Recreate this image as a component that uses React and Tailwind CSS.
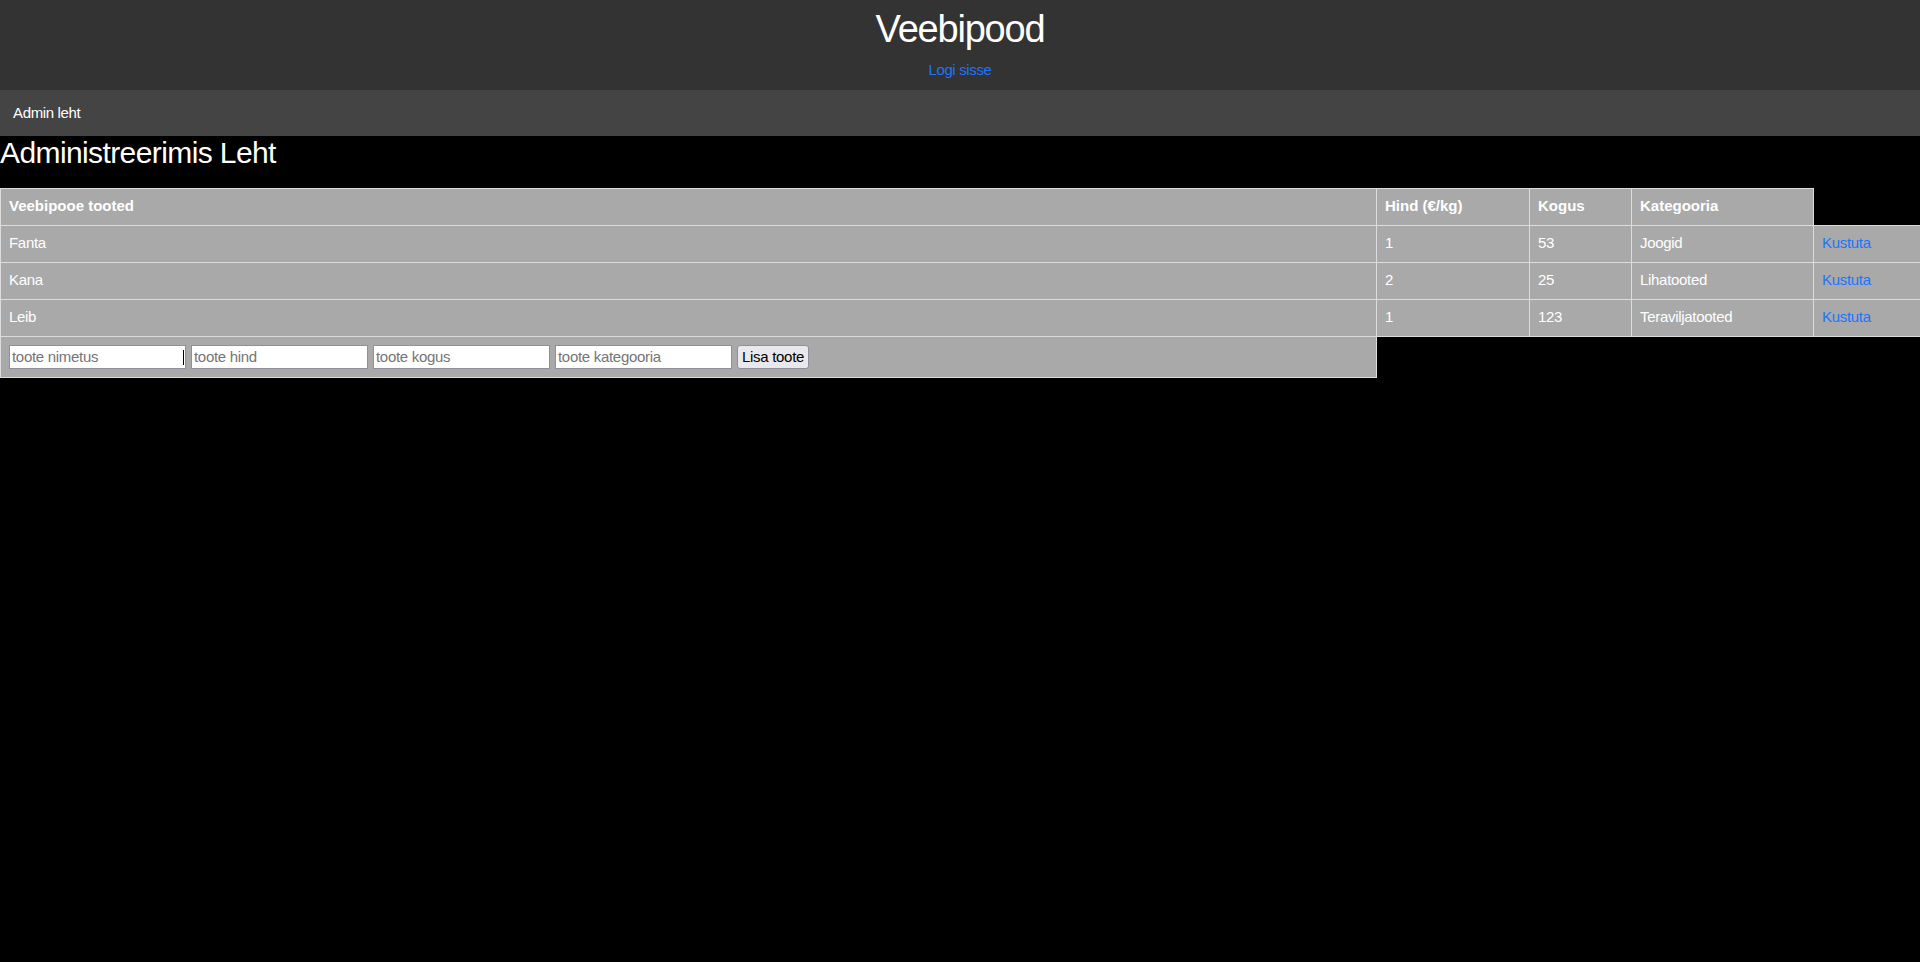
import React from 'react';

const products = [
  { name: 'Fanta', price: 1, qty: 53, cat: 'Joogid' },
  { name: 'Kana', price: 2, qty: 25, cat: 'Lihatooted' },
  { name: 'Leib', price: 1, qty: 123, cat: 'Teraviljatooted' },
];

const cell = 'border border-[#dcdcdc] bg-[#a9a9a9] h-[37px] px-[8px] text-left align-middle';
const field =
  'w-[177px] h-[24px] bg-white border border-[#8f8f9d] px-[2px] text-[15px] tracking-[-0.3px] text-black placeholder:text-[#757575] outline-none';

export default function App() {
  return (
    <div className="min-h-screen bg-black text-white font-['Liberation_Sans',Arial,sans-serif] text-[15px] tracking-[-0.3px]">
      {/* Header */}
      <header className="h-[90px] bg-[#333333] flex flex-col items-center pt-[7px]">
        <h1 className="text-[38px] leading-[44px] font-normal tracking-[-1.2px]">Veebipood</h1>
        <a href="#" className="mt-[10px] leading-[18px] text-[#1a75ff] tracking-[-0.35px]">Logi sisse</a>
      </header>

      {/* Nav */}
      <nav className="h-[46px] bg-[#444444] flex items-center px-[13px]">
        <span className="leading-[18px] tracking-[-0.35px]">Admin leht</span>
      </nav>

      <h2 className="text-[30px] leading-[34.5px] font-normal tracking-[-0.6px]">Administreerimis Leht</h2>

      <table className="mt-[17px] w-[1920px] table-fixed border-collapse">
        <colgroup>
          <col className="w-[1376px]" />
          <col className="w-[153px]" />
          <col className="w-[102px]" />
          <col className="w-[182px]" />
          <col className="w-[107px]" />
        </colgroup>
        <thead>
          <tr>
            <th className={`${cell} font-bold tracking-normal`}>Veebipooe tooted</th>
            <th className={`${cell} font-bold tracking-normal`}>Hind (€/kg)</th>
            <th className={`${cell} font-bold tracking-normal`}>Kogus</th>
            <th className={`${cell} font-bold tracking-normal`}>Kategooria</th>
          </tr>
        </thead>
        <tbody>
          {products.map((p) => (
            <tr key={p.name}>
              <td className={cell}>{p.name}</td>
              <td className={cell}>{p.price}</td>
              <td className={cell}>{p.qty}</td>
              <td className={cell}>{p.cat}</td>
              <td className={cell}>
                <a href="#" className="text-[#1a75ff]">Kustuta</a>
              </td>
            </tr>
          ))}
          <tr>
            <td className="border border-[#dcdcdc] bg-[#a9a9a9] px-[8px] py-[8px]">
              <div className="flex items-center gap-[5px] h-[24px]">
                <div className="relative">
                  <input placeholder="toote nimetus" className={field} />
                  <span className="absolute left-[174px] top-[5px] w-[1px] h-[15px] bg-black" />
                </div>
                <input placeholder="toote hind" className={field} />
                <input placeholder="toote kogus" className={field} />
                <input placeholder="toote kategooria" className={field} />
                <button className="h-[24px] px-[4px] bg-[#e9e9ed] border border-[#8f8f9d] rounded-[3px] text-black text-[15px] tracking-[-0.3px]">
                  Lisa toote
                </button>
              </div>
            </td>
          </tr>
        </tbody>
      </table>
    </div>
  );
}
